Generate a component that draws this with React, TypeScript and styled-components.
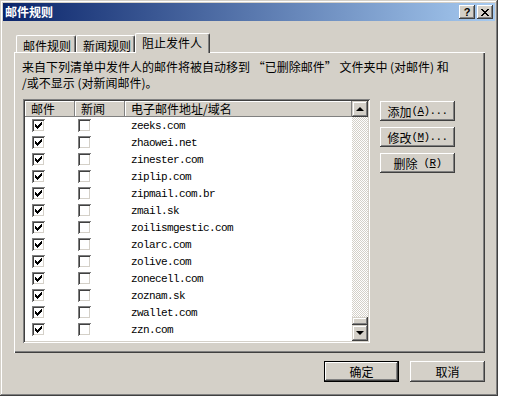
import React from "react"
import styled, { createGlobalStyle } from "styled-components"

const face = "#d4d0c8"

const GlobalStyle = createGlobalStyle`
  html, body { margin: 0; padding: 0; background: #fff; }
  body {
    font-family: "Noto Sans CJK SC", "Liberation Sans", sans-serif;
    font-size: 12px;
    color: #000;
  }
`

const domains = [
  "zeeks.com",
  "zhaowei.net",
  "zinester.com",
  "ziplip.com",
  "zipmail.com.br",
  "zmail.sk",
  "zoilismgestic.com",
  "zolarc.com",
  "zolive.com",
  "zonecell.com",
  "zoznam.sk",
  "zwallet.com",
  "zzn.com",
]

// classic 7x7 check glyph, one string per pixel row
const checkRows = ["......X", ".....XX", "X...XXX", "XX.XXX.", "XXXXX..", ".XXX...", "..X...."]
const closeRows = ["XX....XX", ".XX..XX.", "..XXXX..", "...XX...", "..XXXX..", ".XX..XX.", "XX....XX"]

const pixels = (rows: string[]) =>
  rows
    .flatMap((r, y) => r.split("").map((c, x) => (c === "X" ? `M${x} ${y}h1v1h-1z` : "")))
    .join("")

const App = () => {
  return (
    <>
      <GlobalStyle />
      <Window>
        <TitleBar>
          <Title>邮件规则</Title>
          <CaptionButtons>
            <CaptionButton>?</CaptionButton>
            <CaptionButton>
              <svg width="8" height="7" viewBox="0 0 8 7">
                <path d={pixels(closeRows)} fill="#000" />
              </svg>
            </CaptionButton>
          </CaptionButtons>
        </TitleBar>

        <Body>
          <Tabs>
            <Tab $w={60}>邮件规则</Tab>
            <Tab $w={59}>新闻规则</Tab>
            <Tab $w={75} $active>阻止发件人</Tab>
          </Tabs>

          <Panel>
            <Description>
              <div>来自下列清单中发件人的邮件将被自动移到 “已删除邮件” 文件夹中 (对邮件) 和</div>
              <div>/或不显示 (对新闻邮件)。</div>
            </Description>

            <ListRow>
              <ListBox>
                <ListContent>
                  <HeaderRow>
                    <HeaderCell>邮件</HeaderCell>
                    <HeaderCell>新闻</HeaderCell>
                    <HeaderCell>电子邮件地址/域名</HeaderCell>
                  </HeaderRow>
                  {domains.map((d) => (
                    <Row key={d}>
                      <Cell $pad={7}><CheckBox checked /></Cell>
                      <Cell $pad={3}><CheckBox /></Cell>
                      <Cell $pad={6}><Domain>{d}</Domain></Cell>
                    </Row>
                  ))}
                </ListContent>
                <ScrollBar>
                  <ScrollButton><ArrowUp /></ScrollButton>
                  <Track />
                  <Thumb />
                  <ScrollButton><ArrowDown /></ScrollButton>
                </ScrollBar>
              </ListBox>

              <SideButtons>
                <Button $h={20}>添加<Mono>(<u>A</u>)...</Mono></Button>
                <Button $h={20}>修改<Mono>(<u>M</u>)...</Mono></Button>
                <Button $h={20}>删除<Mono> (<u>R</u>)</Mono></Button>
              </SideButtons>
            </ListRow>
          </Panel>

          <Footer>
            <Button $h={21} $default>确定</Button>
            <Button $h={21}>取消</Button>
          </Footer>
        </Body>
      </Window>
    </>
  )
}
export default App

const CheckBox = ({ checked }: { checked?: boolean }) => (
  <Box>
    {checked && (
      <svg width="7" height="7" viewBox="0 0 7 7">
        <path d={pixels(checkRows)} fill="#000" />
      </svg>
    )}
  </Box>
)

const Window = styled.div`
  box-sizing: border-box;
  width: 498px;
  height: 396px;
  padding: 3px;
  background: ${face};
  box-shadow: inset -1px -1px #404040, inset 1px 1px ${face}, inset -2px -2px #808080, inset 2px 2px #fff;
  display: flex;
  flex-direction: column;
`

const TitleBar = styled.div`
  height: 18px;
  display: flex;
  align-items: center;
  justify-content: space-between;
  padding: 0 2px;
  background: linear-gradient(to right, #0a246a, #a6caf0);
`

const Title = styled.span`
  color: #fff;
  font-weight: bold;
  font-size: 12px;
  line-height: 18px;
`

const CaptionButtons = styled.div`
  display: flex;
  gap: 2px;
`

const CaptionButton = styled.div`
  box-sizing: border-box;
  width: 16px;
  height: 14px;
  display: flex;
  align-items: center;
  justify-content: center;
  background: ${face};
  font-family: "Liberation Sans", sans-serif;
  font-weight: bold;
  font-size: 11px;
  line-height: 14px;
  box-shadow: inset -1px -1px #404040, inset 1px 1px #fff, inset -2px -2px #808080, inset 2px 2px ${face};
`

const Body = styled.div`
  flex: 1;
  padding: 12px 10px 0 11px;
`

const Tabs = styled.div`
  display: flex;
  align-items: flex-end;
  height: 19px;
  padding-left: 2px;
`

const Tab = styled.div<{ $w: number; $active?: boolean }>`
  position: relative;
  z-index: ${(p) => (p.$active ? 1 : 0)};
  box-sizing: border-box;
  width: ${(p) => p.$w}px;
  height: ${(p) => (p.$active ? 20 : 17)}px;
  margin-bottom: ${(p) => (p.$active ? -1 : 0)}px;
  padding: ${(p) => (p.$active ? "2px" : "3px")} 0 0 6px;
  line-height: 13px;
  white-space: nowrap;
  background: ${face};
  border-top: 1px solid #fff;
  border-left: 1px solid #fff;
  border-right: 1px solid #404040;
  border-radius: 2px 2px 0 0;
  box-shadow: inset -1px 0 #808080;
`

const Panel = styled.div`
  position: relative;
  box-sizing: border-box;
  height: 301px;
  padding: 7px 0 0 8px;
  box-shadow: inset 1px 1px #fff, inset -1px -1px #404040, inset -2px -2px #808080;
`

const Description = styled.div`
  line-height: 16px;
  white-space: nowrap;
`

const ListRow = styled.div`
  display: flex;
  align-items: flex-start;
  margin-top: 8px;
  padding-left: 1px;
`

const ListBox = styled.div`
  box-sizing: border-box;
  width: 347px;
  height: 244px;
  padding: 2px;
  display: flex;
  background: #fff;
  box-shadow: inset 1px 1px #808080, inset -1px -1px #fff, inset 2px 2px #404040, inset -2px -2px ${face};
`

const ListContent = styled.div`
  flex: 1;
  overflow: hidden;
`

const HeaderRow = styled.div`
  display: grid;
  grid-template-columns: 50px 50px 1fr;
  height: 16px;
`

const HeaderCell = styled.div`
  box-sizing: border-box;
  padding-left: 6px;
  line-height: 16px;
  white-space: nowrap;
  background: ${face};
  box-shadow: inset -1px -1px #808080, inset 1px 1px #fff;
`

const Row = styled.div`
  display: grid;
  grid-template-columns: 50px 50px 1fr;
  height: 17px;
  align-items: center;
`

const Cell = styled.div<{ $pad: number }>`
  display: flex;
  align-items: center;
  padding-left: ${(p) => p.$pad}px;
`

const Box = styled.span`
  box-sizing: border-box;
  width: 13px;
  height: 13px;
  display: inline-flex;
  align-items: center;
  justify-content: center;
  background: #fff;
  box-shadow: inset 1px 1px #808080, inset -1px -1px #fff, inset 2px 2px #404040, inset -2px -2px ${face};
`

const Domain = styled.span`
  font-family: "Liberation Mono", monospace;
  font-size: 11px;
  letter-spacing: -0.6px;
  white-space: nowrap;
`

const ScrollBar = styled.div`
  width: 16px;
  display: flex;
  flex-direction: column;
`

const ScrollButton = styled.div`
  box-sizing: border-box;
  width: 16px;
  height: 16px;
  display: flex;
  align-items: center;
  justify-content: center;
  background: ${face};
  box-shadow: inset -1px -1px #404040, inset 1px 1px ${face}, inset -2px -2px #808080, inset 2px 2px #fff;
`

const ArrowUp = styled.span`
  width: 0;
  height: 0;
  border-left: 4px solid transparent;
  border-right: 4px solid transparent;
  border-bottom: 4px solid #000;
  margin-top: -1px;
`

const ArrowDown = styled.span`
  width: 0;
  height: 0;
  border-left: 4px solid transparent;
  border-right: 4px solid transparent;
  border-top: 4px solid #000;
`

const Track = styled.div`
  flex: 1;
  background-image: repeating-conic-gradient(${face} 0 25%, #fff 0 50%);
  background-size: 2px 2px;
`

const Thumb = styled.div`
  height: 8px;
  background: ${face};
  box-shadow: inset -1px -1px #404040, inset 1px 1px ${face}, inset -2px -2px #808080, inset 2px 2px #fff;
`

const SideButtons = styled.div`
  display: flex;
  flex-direction: column;
  gap: 6px;
  margin: 2px 0 0 10px;
`

const Button = styled.div<{ $h: number; $default?: boolean }>`
  box-sizing: border-box;
  width: 75px;
  height: ${(p) => p.$h}px;
  display: flex;
  align-items: center;
  justify-content: center;
  white-space: nowrap;
  background: ${face};
  box-shadow: ${(p) =>
    p.$default
      ? `inset 0 0 0 1px #000, inset -2px -2px #404040, inset 2px 2px #fff, inset -3px -3px #808080`
      : `inset -1px -1px #404040, inset 1px 1px #fff, inset -2px -2px #808080, inset 2px 2px ${face}`};
`

const Mono = styled.span`
  font-family: "Liberation Mono", monospace;
  font-size: 11px;
  letter-spacing: -0.6px;
  white-space: pre;
`

const Footer = styled.div`
  display: flex;
  justify-content: flex-end;
  gap: 11px;
  margin-top: 8px;
`
